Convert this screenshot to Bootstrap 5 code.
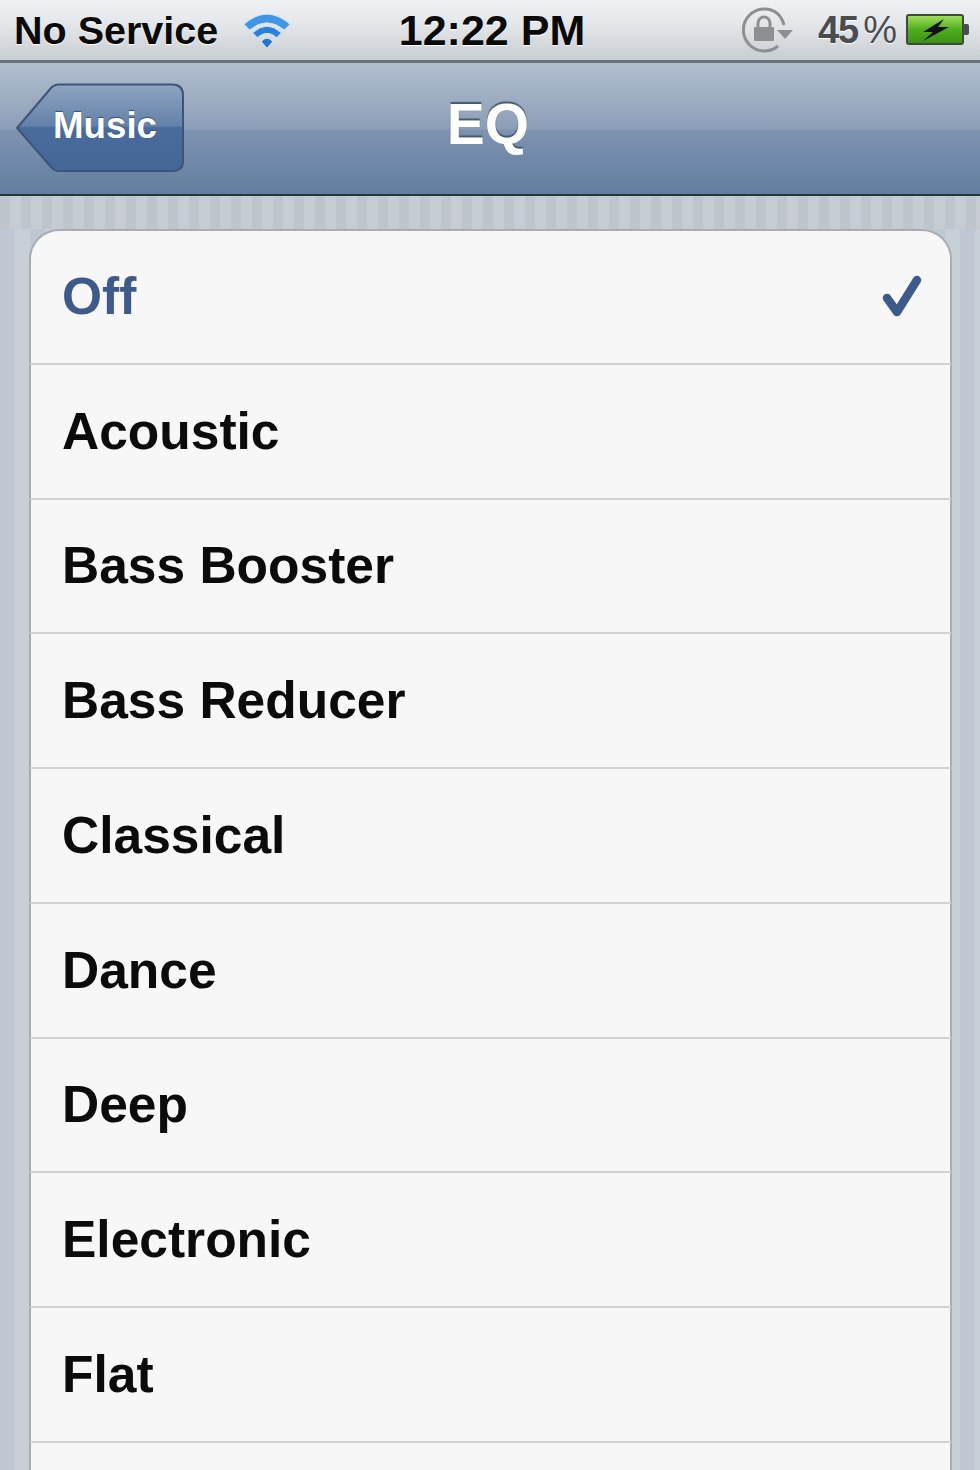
<!DOCTYPE html>
<html lang="en">
<head>
  <meta charset="UTF-8">
  <title>EQ</title>
  <link href="https://cdn.jsdelivr.net/npm/bootstrap@5.3.3/dist/css/bootstrap.min.css" rel="stylesheet">
  <style>
    html, body { height: 100%; margin: 0; overflow: hidden; }
    body {
      font-family: "Liberation Sans", Arial, sans-serif;
      background: repeating-linear-gradient(90deg, #bfc8d2 0, #bfc8d2 15px, #c9cfd7 15px, #c9cfd7 30px);
    }
    .phone { height: 1470px; overflow: hidden; }

    .status-bar {
      height: 63px;
      padding: 0 10px 0 14px;
      background: linear-gradient(#f0f2f4 0, #e3e6e9 25px, #c9ced2 59px);
      border-bottom: 3px solid #6d727a;
    }
    .status-txt { font-size: 39.500px; font-weight: 700; color: #0a0a0a; line-height: 60px; text-shadow: 0 1px 1px #fff; white-space: nowrap; }
    .status-time { font-size: 43px; }
    .status-side { flex: 1 1 0; min-width: 0; }
    .wifi-icon { margin-left: 24px; }
    .lock-icon { margin-right: 24px; }
    .batt-icon { margin-left: 10px; }
    .status-pct { font-size: 38px; font-weight: 700; color: #4a4c4f; line-height: 60px; text-shadow: 0 1px 1px #fff; letter-spacing: -1px; white-space: nowrap; }
    .status-pct span { font-weight: 400; margin-left: 5px; }

    .nav-head {
      height: 133px;
      padding: 20px 0 0 16px;
      background: linear-gradient(#b1bece 0, #8c9eb7 66px, #7e93b0 67px, #627ea0 131px);
      border-bottom: 2px solid #283342;
      position: relative;
    }
    .back-btn {
      width: 168px;
      height: 90px;
      padding-left: 37px;
      position: relative;
      color: #fff;
      font-size: 36.7px;
      font-weight: 700;
      line-height: 86px;
      text-shadow: 0 -1px 1px #3a4f6e;
    }
    .back-btn svg { position: absolute; left: 0; top: 0; }
    .back-btn span { position: relative; }
    .nav-title {
      position: absolute;
      left: 0;
      right: 0;
      top: 28px;
      padding-right: 4px;
      text-align: center;
      color: #fff;
      font-size: 57px;
      font-weight: 700;
      line-height: 66px;
      text-shadow: 0 -2px 1px #46586f;
    }

    .stripe-top {
      height: 33px;
      background: repeating-linear-gradient(90deg, #bfc5cd 0, #bfc5cd 10px, #c7ccd3 10px, #c7ccd3 21px);
    }
    .eq-card {
      margin: 0 28px 0 29px;
      background: #f7f7f7;
      border: 2px solid #a9adb3;
      border-bottom: 0;
      border-radius: 30px 30px 0 0;
    }
    .eq-row {
      height: 134.75px;
      padding: 0 29px 0 32px;
      background: transparent;
      border: 0;
      border-bottom: 2px solid #cfd1d3;
      margin: 0 -1px;
      font-size: 51.5px;
      font-weight: 700;
      color: #0b0b0b;
    }
    .eq-row.first-row { height: 133.75px; color: #3e5a8a; border-radius: 30px 30px 0 0; }
  </style>
</head>
<body>
  <div class="phone">
    <div class="status-bar d-flex justify-content-between align-items-start">
      <div class="status-side d-flex align-items-center">
        <div class="status-txt">No Service</div>
        <svg class="wifi-icon" width="50" height="40" viewBox="0 0 52 40">
          <path d="M2 14 Q26 -7 50 14 L44 20 Q26 5 8 20 Z" fill="#3f96e8" stroke="#d6e4f2" stroke-width="1"/>
          <path d="M11 23 Q26 9 41 23 L36 28 Q26 19 16 28 Z" fill="#2b80de" stroke="#d6e4f2" stroke-width="1"/>
          <path d="M20 32 Q26 25 32 32 L26 39 Z" fill="#2475d2" stroke="#d6e4f2" stroke-width="1"/>
        </svg>
      </div>
      <div class="status-txt status-time">12:22 PM</div>
      <div class="status-side d-flex justify-content-end align-items-center">
        <svg class="lock-icon" width="54" height="48" viewBox="0 0 54 48">
          <path d="M38 40 A21 21 0 1 1 38 8 Q42 12 44 19" fill="none" stroke="#8d9091" stroke-width="3"/>
          <path d="M37 24 L53 24 L45 33 Z" fill="#8d9091"/>
          <path d="M18 22 V17 A6 6 0 0 1 30 17 V22" fill="none" stroke="#8d9091" stroke-width="3"/>
          <rect x="14" y="21" width="20" height="14" rx="1" fill="#8d9091"/>
        </svg>
        <div class="status-pct">45<span>%</span></div>
        <svg class="batt-icon" width="64" height="32" viewBox="0 0 64 32">
          <defs>
            <linearGradient id="battFill" x1="0" y1="0" x2="0" y2="1">
              <stop offset="0" stop-color="#a5e060"/>
              <stop offset=".5" stop-color="#4fae1f"/>
              <stop offset="1" stop-color="#3a8f16"/>
            </linearGradient>
          </defs>
          <rect x="1" y="1" width="56" height="29" rx="2" fill="url(#battFill)" stroke="#3f4a3d" stroke-width="2"/>
          <rect x="57" y="10" width="6" height="11" rx="2" fill="#4a4c4f"/>
          <path d="M38 5 L17 18 L27 18 L17 27 L43 13 L32 13 Z" fill="#111"/>
        </svg>
      </div>
    </div>

    <div class="nav-head">
      <div class="back-btn">
        <svg width="168" height="90" viewBox="0 0 168 90">
          <defs>
            <linearGradient id="backFill" x1="0" y1="0" x2="0" y2="1">
              <stop offset="0" stop-color="#8ea4c2"/>
              <stop offset=".48" stop-color="#6382a9"/>
              <stop offset=".5" stop-color="#4a6c9c"/>
              <stop offset="1" stop-color="#456798"/>
            </linearGradient>
          </defs>
          <path d="M1 45 L35 5 Q38 1.500 43 1.500 L156 1.500 Q167 1.500 167 12 L167 78 Q167 88 156 88 L43 88 Q38 88 35 84 Z" fill="url(#backFill)" stroke="#3d5475" stroke-width="2"/>
        </svg>
        <span>Music</span>
      </div>
      <div class="nav-title">EQ</div>
    </div>

    <div class="stripe-top"></div>

    <ul class="list-group eq-card">
      <li class="list-group-item eq-row first-row d-flex justify-content-between align-items-center">
        <span>Off</span>
        <svg width="40" height="44" viewBox="0 0 40 44">
          <path d="M5 23 L15 37 L35 5" fill="none" stroke="#3e5a8a" stroke-width="8.500" stroke-linecap="round" stroke-linejoin="round"/>
        </svg>
      </li>
      <li class="list-group-item eq-row d-flex align-items-center">Acoustic</li>
      <li class="list-group-item eq-row d-flex align-items-center">Bass Booster</li>
      <li class="list-group-item eq-row d-flex align-items-center">Bass Reducer</li>
      <li class="list-group-item eq-row d-flex align-items-center">Classical</li>
      <li class="list-group-item eq-row d-flex align-items-center">Dance</li>
      <li class="list-group-item eq-row d-flex align-items-center">Deep</li>
      <li class="list-group-item eq-row d-flex align-items-center">Electronic</li>
      <li class="list-group-item eq-row d-flex align-items-center">Flat</li>
      <li class="list-group-item eq-row d-flex align-items-center"></li>
    </ul>
  </div>
  <script src="https://cdn.jsdelivr.net/npm/bootstrap@5.3.3/dist/js/bootstrap.bundle.min.js"></script>
</body>
</html>
